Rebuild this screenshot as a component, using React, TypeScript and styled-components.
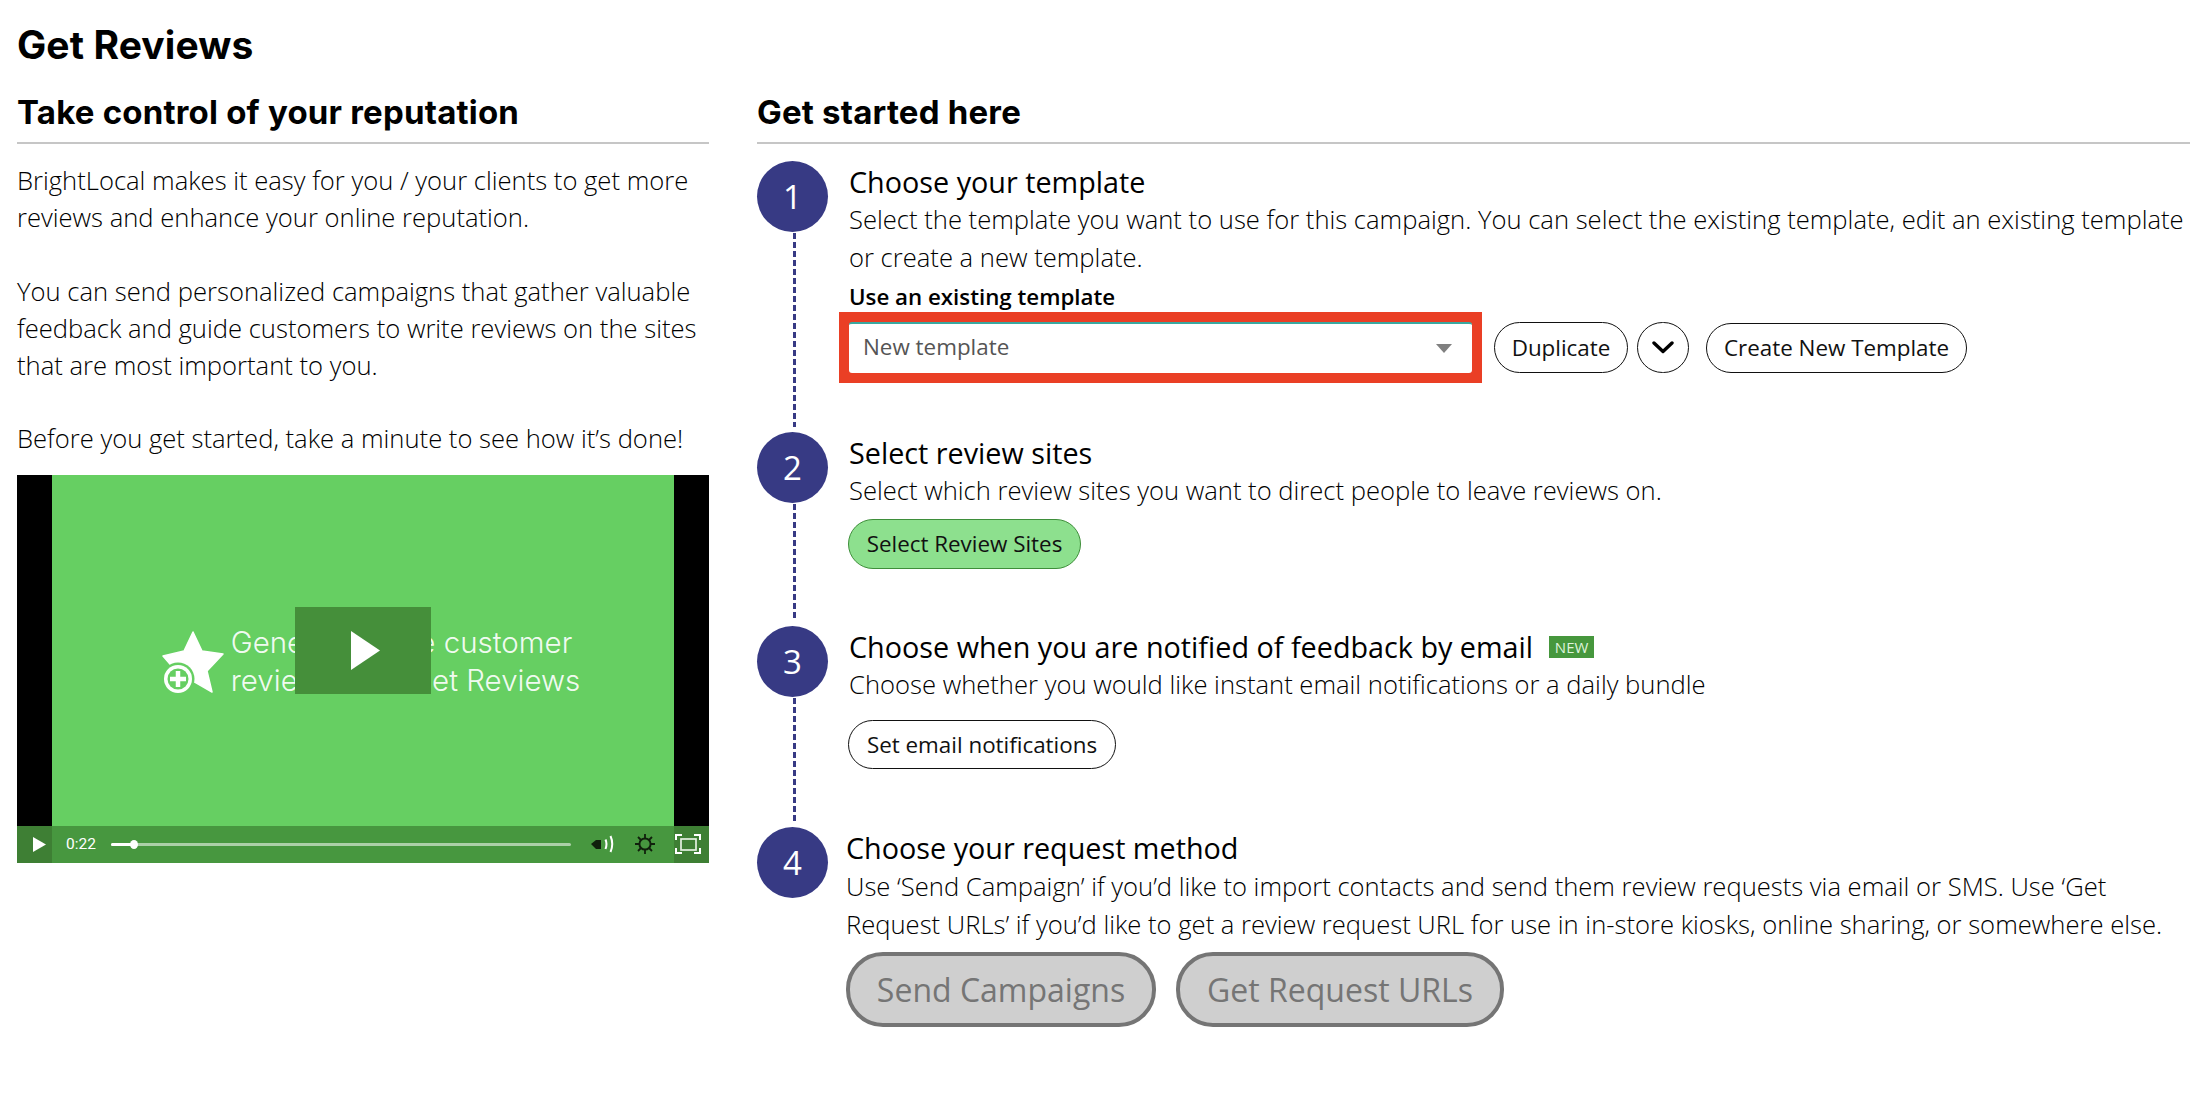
import React from 'react';
import styled, { createGlobalStyle } from 'styled-components';

const GlobalStyle = createGlobalStyle`
	html, body {
		margin: 0;
		padding: 0;
		background: #fff;
		color: #000;
		font-family: 'Open Sans', 'Liberation Sans', sans-serif;
	}
	* {
		box-sizing: border-box;
	}
`;

const Page = styled.div`
	width: 2203px;
	height: 1094px;
	padding: 23px 13px 0 17px;
	overflow: hidden;
`;

const Title = styled.h1`
	margin: 0;
	height: 44px;
	font: 700 39px/44px Inter, 'Liberation Sans', sans-serif;
	letter-spacing: 0.1px;
`;

const Columns = styled.div`
	display: grid;
	grid-template-columns: 692px 1fr;
	column-gap: 48px;
	margin-top: 24px;
`;

const SectionTitle = styled.h2`
	margin: 0;
	height: 53px;
	padding-top: 1px;
	font: 700 33px/40px Inter, 'Liberation Sans', sans-serif;
	letter-spacing: 0.2px;
	border-bottom: 2px solid #c6c6c6;
`;

const Intro = styled.p`
	margin: 0;
	font-size: 25.6px;
	font-weight: 300;
	line-height: 37.3px;
	& + & {
		margin-top: 36px;
	}
	&:first-of-type {
		margin-top: 18px;
	}
`;

const Video = styled.div`
	position: relative;
	margin-top: 17px;
	height: 388px;
	display: flex;
	flex-direction: column;
`;

const Stage = styled.div`
	flex: 1;
	display: flex;
	background: #66cf62;
	border-left: 35px solid #000;
	border-right: 35px solid #000;
	align-items: center;
	justify-content: center;
	padding: 23px 0 0 16px;
	gap: 7px;
`;

const PosterText = styled.div`
	color: rgba(255, 255, 255, 0.93);
	font: 300 29.5px/37.5px Inter, 'Liberation Sans', sans-serif;
	white-space: nowrap;
`;

const BigPlay = styled.div`
	position: absolute;
	left: 278px;
	top: 132px;
	width: 136px;
	height: 87px;
	padding-left: 5px;
	background: #458f3a;
	display: flex;
	align-items: center;
	justify-content: center;
`;

const Controls = styled.div`
	height: 37px;
	display: flex;
	align-items: center;
	background: #47973f;
`;

const ControlEnd = styled.div<{ $pad: number }>`
	flex: none;
	width: 35px;
	height: 37px;
	padding-left: ${(p) => p.$pad}px;
	background: #3e7f34;
	display: flex;
	align-items: center;
`;

const Time = styled.span`
	margin-left: 14px;
	width: 45px;
	color: #fff;
	font: 400 15.5px Roboto, sans-serif;
`;

const Scrubber = styled.div`
	position: relative;
	width: 460px;
	height: 3px;
	border-radius: 2px;
	background: rgba(255, 255, 255, 0.55);
`;

const ScrubberFill = styled.div`
	position: absolute;
	left: 0;
	top: 0;
	height: 3px;
	border-radius: 2px;
	background: #fff;
`;

const ScrubberKnob = styled.div`
	position: absolute;
	top: -3px;
	width: 8px;
	height: 9px;
	border-radius: 50%;
	background: #fff;
`;

const ControlIcon = styled.div<{ $left: number }>`
	margin-left: ${(p) => p.$left}px;
	display: flex;
`;

const Steps = styled.div`
	margin-top: 17px;
`;

const Step = styled.div<{ $height?: number }>`
	display: flex;
	height: ${(p) => (p.$height ? `${p.$height}px` : 'auto')};
`;

const Rail = styled.div`
	flex: none;
	width: 71px;
	display: flex;
	flex-direction: column;
	align-items: center;
`;

const Circle = styled.div`
	flex: none;
	width: 71px;
	height: 71px;
	border-radius: 50%;
	background: #373a84;
	color: #fff;
	font-size: 33px;
	display: flex;
	align-items: center;
	justify-content: center;
`;

const Dashes = styled.div`
	flex: 1;
	width: 3px;
	margin: 1px 0 5px 4px;
	background: repeating-linear-gradient(
		to bottom,
		#373a84 0,
		#373a84 6px,
		transparent 6px,
		transparent 9px
	);
`;

const Body = styled.div<{ $left?: number }>`
	margin-left: ${(p) => p.$left ?? 21}px;
	min-width: 0;
`;

const StepTitle = styled.h3<{ $below?: number }>`
	margin: 0 0 ${(p) => p.$below ?? 0}px;
	padding-top: 2px;
	font-size: 28.75px;
	font-weight: 400;
	line-height: 38px;
	display: flex;
	align-items: center;
`;

const NewBadge = styled.span`
	margin-left: 16px;
	width: 45px;
	height: 22px;
	background: #46973d;
	color: #dff3dc;
	font-size: 15px;
	font-weight: 500;
	line-height: 22px;
	text-align: center;
`;

const StepText = styled.p`
	margin: 0;
	font-size: 25.6px;
	font-weight: 300;
	line-height: 37.5px;
	white-space: nowrap;
`;

const FieldLabel = styled.div`
	font-size: 22.3px;
	font-weight: 600;
	line-height: 30px;
	margin-top: 6px;
`;

const TemplateRow = styled.div`
	display: flex;
	align-items: center;
	margin: 0 0 0 -10px;
`;

const Highlight = styled.div`
	width: 643px;
	height: 71px;
	border: 10px solid #ea3f25;
	background: #ea3f25;
`;

const Select = styled.div`
	height: 100%;
	padding: 0 20px 4px 14px;
	display: flex;
	align-items: center;
	justify-content: space-between;
	background: #fff;
	border-top: 2px solid #3aa8a0;
	border-radius: 3px;
	color: #555;
	font-size: 22.4px;
	font-weight: 400;
`;

const Caret = styled.div`
	width: 0;
	height: 0;
	margin-top: 4px;
	border-left: 8px solid transparent;
	border-right: 8px solid transparent;
	border-top: 9px solid #808080;
`;

const PillRow = styled.div`
	display: flex;
	align-items: center;
	margin-left: 12px;
	gap: 9px;
`;

const Pill = styled.button<{ $width: number; $height?: number; $green?: boolean; $gapLeft?: number }>`
	flex: none;
	width: ${(p) => p.$width}px;
	height: ${(p) => p.$height ?? 50}px;
	margin-left: ${(p) => p.$gapLeft ?? 0}px;
	padding: 0;
	display: flex;
	align-items: center;
	justify-content: center;
	border: 1px solid ${(p) => (p.$green ? '#3e8e3a' : '#111')};
	border-radius: 26px;
	background: ${(p) => (p.$green ? '#8de08e' : '#fff')};
	color: #111;
	font-family: 'Open Sans', sans-serif;
	font-size: 22.4px;
	font-weight: 400;
`;

const BigPill = styled.button<{ $width: number }>`
	flex: none;
	width: ${(p) => p.$width}px;
	height: 75px;
	padding: 0;
	border: 4px solid #757575;
	border-radius: 37px;
	background: #cfcfcf;
	color: #757575;
	font-family: 'Open Sans', sans-serif;
	font-size: 32px;
	font-weight: 400;
`;

const BigPillRow = styled.div`
	display: flex;
	gap: 20px;
	margin-top: 9px;
`;

const SingleAction = styled.div<{ $top: number }>`
	margin: ${(p) => p.$top}px 0 0 -1px;
`;

const StarPlus = () => (
	<svg width='62' height='62' viewBox='0 0 62 62'>
		<path
			d='M31 1 L40 20 L61 23 L45 40 L50 61 L31 50 L14 40 L1 25 L22 20 Z'
			fill='#fff'
			stroke='#fff'
			strokeWidth='1.5'
			strokeLinejoin='round'
		/>
		<circle cx='16' cy='48' r='16.5' fill='#66cf62' />
		<circle cx='16' cy='48' r='14' fill='#fff' />
		<circle cx='16' cy='48' r='10.5' fill='#66cf62' />
		<path d='M16 40 V56 M8 48 H24' stroke='#fff' strokeWidth='4.5' />
	</svg>
);

const PlayGlyph = ({ width, height }: { width: number; height: number }) => (
	<svg width={width} height={height} viewBox='0 0 10 14' preserveAspectRatio='none'>
		<path d='M0 0 L10 7 L0 14 Z' fill='#fff' />
	</svg>
);

const VolumeIcon = () => (
	<svg width='23' height='18' viewBox='0 0 23 18'>
		<path d='M0 9 L5 5 H10 V14 H5 Z' fill='#10200c' />
		<path d='M14.5 4.5 Q16.5 9 14.5 14' fill='none' stroke='#fff' strokeWidth='2' />
		<path d='M19.5 1 Q23 9 19.5 17' fill='none' stroke='#fff' strokeWidth='2' />
	</svg>
);

const GearIcon = () => (
	<svg width='20' height='20' viewBox='0 0 20 20'>
		<circle cx='10' cy='10' r='5.6' fill='none' stroke='#10200c' strokeWidth='2' />
		<path
			d='M10 0 V4.5 M10 15.5 V20 M0 10 H4.5 M15.5 10 H20 M3 3 L6 6 M14 14 L17 17 M3 17 L6 14 M14 6 L17 3'
			stroke='#10200c'
			strokeWidth='1.8'
		/>
	</svg>
);

const FullscreenIcon = () => (
	<svg width='26' height='20' viewBox='0 0 26 20'>
		<path
			d='M1 6 V1 H7 M19 1 H25 V6 M25 14 V19 H19 M7 19 H1 V14'
			fill='none'
			stroke='#fff'
			strokeWidth='2'
		/>
		<rect x='6' y='5' width='15' height='11' fill='none' stroke='#e4f0e2' strokeWidth='1.7' />
	</svg>
);

const ChevronIcon = () => (
	<svg width='22' height='13' viewBox='0 0 22 13'>
		<path
			d='M2 2 L11 10.5 L20 2'
			fill='none'
			stroke='#000'
			strokeWidth='3.4'
			strokeLinecap='round'
			strokeLinejoin='round'
		/>
	</svg>
);

export default function App() {
	return (
		<Page>
			<GlobalStyle />
			<Title>Get Reviews</Title>
			<Columns>
				<div>
					<SectionTitle>Take control of your reputation</SectionTitle>
					<Intro>
						BrightLocal makes it easy for you / your clients to get more
						<br />
						reviews and enhance your online reputation.
					</Intro>
					<Intro>
						You can send personalized campaigns that gather valuable
						<br />
						feedback and guide customers to write reviews on the sites
						<br />
						that are most important to you.
					</Intro>
					<Intro>Before you get started, take a minute to see how it’s done!</Intro>
					<Video>
						<Stage>
							<StarPlus />
							<PosterText>
								Generate more customer
								<br />
								reviews with Get Reviews
							</PosterText>
						</Stage>
						<BigPlay>
							<PlayGlyph width={29} height={39} />
						</BigPlay>
						<Controls>
							<ControlEnd $pad={16}>
								<PlayGlyph width={13} height={15} />
							</ControlEnd>
							<Time>0:22</Time>
							<Scrubber>
								<ScrubberFill style={{ width: 22 }} />
								<ScrubberKnob style={{ left: 19 }} />
							</Scrubber>
							<ControlIcon $left={20}>
								<VolumeIcon />
							</ControlIcon>
							<ControlIcon $left={21}>
								<GearIcon />
							</ControlIcon>
							<ControlIcon $left={19}>
								<ControlEnd $pad={1}>
									<FullscreenIcon />
								</ControlEnd>
							</ControlIcon>
						</Controls>
					</Video>
				</div>
				<div>
					<SectionTitle>Get started here</SectionTitle>
					<Steps>
						<Step $height={271}>
							<Rail>
								<Circle>1</Circle>
								<Dashes />
							</Rail>
							<Body>
								<StepTitle>Choose your template</StepTitle>
								<StepText>
									Select the template you want to use for this campaign. You can select the existing template, edit an existing template
								</StepText>
								<StepText>or create a new template.</StepText>
								<FieldLabel>Use an existing template</FieldLabel>
								<TemplateRow>
									<Highlight>
										<Select>
											New template
											<Caret />
										</Select>
									</Highlight>
									<PillRow>
										<Pill $width={134} $height={51}>Duplicate</Pill>
										<Pill $width={52} $height={51}>
											<ChevronIcon />
										</Pill>
										<Pill $width={261} $gapLeft={8}>Create New Template</Pill>
									</PillRow>
								</TemplateRow>
							</Body>
						</Step>
						<Step $height={194}>
							<Rail>
								<Circle>2</Circle>
								<Dashes />
							</Rail>
							<Body>
								<StepTitle>Select review sites</StepTitle>
								<StepText>Select which review sites you want to direct people to leave reviews on.</StepText>
								<SingleAction $top={9}>
									<Pill $width={233} $green>Select Review Sites</Pill>
								</SingleAction>
							</Body>
						</Step>
						<Step $height={201}>
							<Rail>
								<Circle>3</Circle>
								<Dashes />
							</Rail>
							<Body>
								<StepTitle>
									Choose when you are notified of feedback by email
									<NewBadge>NEW</NewBadge>
								</StepTitle>
								<StepText>Choose whether you would like instant email notifications or a daily bundle</StepText>
								<SingleAction $top={16}>
									<Pill $width={268} $height={49}>Set email notifications</Pill>
								</SingleAction>
							</Body>
						</Step>
						<Step>
							<Rail>
								<Circle>4</Circle>
							</Rail>
							<Body $left={18}>
								<StepTitle $below={1}>Choose your request method</StepTitle>
								<StepText>
									Use ‘Send Campaign’ if you’d like to import contacts and send them review requests via email or SMS. Use ‘Get
								</StepText>
								<StepText>
									Request URLs’ if you’d like to get a review request URL for use in in-store kiosks, online sharing, or somewhere else.
								</StepText>
								<BigPillRow>
									<BigPill $width={310}>Send Campaigns</BigPill>
									<BigPill $width={328}>Get Request URLs</BigPill>
								</BigPillRow>
							</Body>
						</Step>
					</Steps>
				</div>
			</Columns>
		</Page>
	);
}
